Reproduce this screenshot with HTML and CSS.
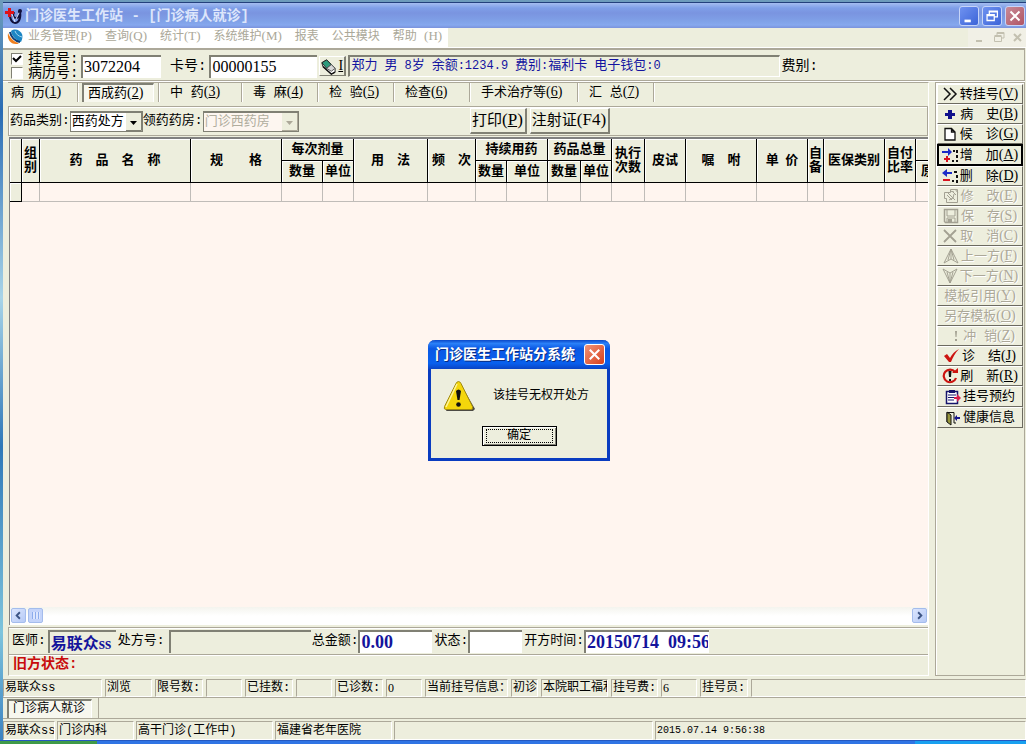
FILE: index.html
```html
<!DOCTYPE html>
<html lang="zh-CN">

<head>
    <meta charset="UTF-8">
    <title>门诊医生工作站</title>
    <link rel="stylesheet" href="styles.css">
</head>

<body>
    <div class="window">
        <div class="titlebar">
            <svg class="app-icon" viewBox="0 0 18 18">
                <path d="M5 8c0 4 2 8 5 8s6-3 5-11M9 5c-2 4 0 6 2 6s4-3 3-7" fill="none" stroke="#10103c" stroke-width="2.2"/>
                <path d="M7 7l3 8M15 4l-4 8" stroke="#dfe6ff" stroke-width="1"/>
                <circle cx="15" cy="4" r="2" fill="#10103c"/>
                <path d="M3 1h3v3h3v3H6v3H3V7H0V4h3z" fill="#e01218"/>
            </svg>
            <h1>门诊医生工作站 - [门诊病人就诊]</h1>
            <div class="win-btns">
                <button class="win-btn" aria-label="最小化"><svg viewBox="0 0 20 20"><path d="M5 14h7v3H5z" fill="#fff"/></svg></button>
                <button class="win-btn" aria-label="还原"><svg viewBox="0 0 20 20"><path d="M7 8V4.500h9V11h-3M7 5.500h9M4.500 8.500h8V15h-8zM4.500 9.500h8" fill="none" stroke="#fff" stroke-width="1.400"/></svg></button>
                <button class="win-btn win-close" aria-label="关闭"><svg viewBox="0 0 20 20"><path d="M5 5l10 10M15 5L5 15" stroke="#fff" stroke-width="2.200"/></svg></button>
            </div>
        </div>

        <div class="menubar">
            <nav class="menu">
                <svg class="menu-icon" viewBox="0 0 16 16">
                    <path d="M1 4C0 10 3 15 9 15c1 0 2 0 3-1C7 13 3 9 1 4z" fill="#f08020"/>
                    <path d="M4 2c4-3 9-1 11 3 1 3 0 6-1 8C9 11 5 8 4 2z" fill="#1d86c4"/>
                    <path d="M3 3c1 5 5 9 10 10" fill="none" stroke="#0d3f78" stroke-width="2"/>
                    <path d="M8 2c1 3 3 5 7 6" fill="none" stroke="#9fd4f0" stroke-width="1"/>
                </svg>
                <a href="#">业务管理<span class="key">(P)</span></a>
                <a href="#">查询<span class="key">(Q)</span></a>
                <a href="#">统计<span class="key">(T)</span></a>
                <a href="#">系统维护<span class="key">(M)</span></a>
                <a href="#">报表</a>
                <a href="#">公共模块</a>
                <a href="#">帮助 <span class="key">(H)</span></a>
            </nav>
            <div class="mdi-btns">
                <svg viewBox="0 0 12 12"><path d="M2 9h6v2H2z" fill="#c3c0b0"/></svg>
                <svg viewBox="0 0 12 12"><path d="M4 4V1.500h7V7H9M1.500 5.500h7v5h-7zM1.500 4.500h7M4 2.500h7" fill="none" stroke="#c3c0b0"/></svg>
                <svg viewBox="0 0 12 12"><path d="M2 3l7 7M9 3l-7 7" stroke="#c3c0b0" stroke-width="2"/></svg>
            </div>
        </div>

        <div class="patient-bar">
            <div class="checks">
                <label><input type="checkbox" checked>挂号号:</label>
                <label><input type="checkbox">病历号:</label>
            </div>
            <input class="field reg-no" type="text" value="3072204" aria-label="挂号号">
            <label class="big-label" for="card">卡号:</label>
            <input class="field card-no" id="card" type="text" value="00000155">
            <button class="read-card" aria-label="读卡">
                <svg viewBox="0 0 18 18">
                    <path d="M2 5l5-3 9 9v4l-4 2-9-8z" fill="#fff" stroke="#222"/>
                    <path d="M2 5l5-3 5 5-5 4z" fill="#2c9a7c" stroke="#222"/>
                    <path d="M7 11l5-4 4 4-4 3z" fill="#d8d8d8" stroke="#555"/>
                    <path d="M3 9l9 8 4-2" fill="none" stroke="#111" stroke-width="1.500"/>
                </svg>
                <u class="key">I</u>
            </button>
            <div class="patient-info">
                <span>郑力</span>
                <span>男</span>
                <span><i>8</i>岁</span>
                <span>余额<i>:1234.9</i></span>
                <span>费别<i>:</i>福利卡</span>
                <span>电子钱包<i>:0</i></span>
            </div>
            <span class="big-label fee-type">费别:</span>
        </div>

        <div class="main">
            <div class="workspace">
                <div class="tabs">
                    <button class="tab tab-short">病 历<span class="key">(<u>1</u>)</span></button>
                    <button class="tab tab-current"><span>西成药<span class="key">(<u>2</u>)</span></span></button>
                    <button class="tab tab-mid">中 药<span class="key">(<u>3</u>)</span></button>
                    <button class="tab">毒 麻<span class="key">(<u>4</u>)</span></button>
                    <button class="tab">检 验<span class="key">(<u>5</u>)</span></button>
                    <button class="tab">检查<span class="key">(<u>6</u>)</span></button>
                    <button class="tab tab-long">手术治疗等<span class="key">(<u>6</u>)</span></button>
                    <button class="tab">汇 总<span class="key">(<u>7</u>)</span></button>
                </div>

                <div class="filter">
                    <div class="filter-fields">
                        <label for="kind">药品类别:</label>
                        <select id="kind" class="combo">
                            <option>西药处方</option>
                        </select>
                        <label for="pharmacy">领药药房:</label>
                        <select id="pharmacy" class="combo combo-wide" disabled>
                            <option>门诊西药房</option>
                        </select>
                    </div>
                    <button class="tool-btn">打印<span class="key">(<u>P</u>)</span></button>
                    <button class="tool-btn">注射证<span class="key">(F4)</span></button>
                </div>

                <div class="grid">
                    <table>
                        <colgroup>
                            <col style="width:12px"><col style="width:18px"><col style="width:151px"><col style="width:91px">
                            <col style="width:41px"><col style="width:31px"><col style="width:74px"><col style="width:48px">
                            <col style="width:31px"><col style="width:41px"><col style="width:33px"><col style="width:31px">
                            <col style="width:33px"><col style="width:41px"><col style="width:71px"><col style="width:51px">
                            <col style="width:16px"><col style="width:61px"><col style="width:31px"><col style="width:24px">
                        </colgroup>
                        <thead>
                            <tr>
                                <th rowspan="2"></th>
                                <th rowspan="2">组<br>别</th>
                                <th rowspan="2">药&emsp;品&emsp;名&emsp;称</th>
                                <th rowspan="2">规&emsp;&emsp;格</th>
                                <th colspan="2">每次剂量</th>
                                <th rowspan="2">用&emsp;法</th>
                                <th rowspan="2">频&emsp;次</th>
                                <th colspan="2">持续用药</th>
                                <th colspan="2">药品总量</th>
                                <th rowspan="2">执行<br>次数</th>
                                <th rowspan="2">皮试</th>
                                <th rowspan="2">嘱&emsp;咐</th>
                                <th rowspan="2">单&ensp;价</th>
                                <th rowspan="2">自<br>备</th>
                                <th rowspan="2">医保类别</th>
                                <th rowspan="2">自付<br>比率</th>
                                <th></th>
                            </tr>
                            <tr>
                                <th>数量</th>
                                <th>单位</th>
                                <th>数量</th>
                                <th>单位</th>
                                <th>数量</th>
                                <th>单位</th>
                                <th>原</th>
                            </tr>
                        </thead>
                        <tbody>
                            <tr>
                                <th></th>
                                <td></td><td></td><td></td><td></td><td></td><td></td><td></td><td></td><td></td><td></td>
                                <td></td><td></td><td></td><td></td><td></td><td></td><td></td><td></td><td></td>
                            </tr>
                        </tbody>
                    </table>
                </div>
                <div class="scrollbar">
                    <button class="scroll-btn" aria-label="向左"><svg viewBox="0 0 14 14"><path d="M8.500 3.500L5 7l3.500 3.500" fill="none" stroke="#3c5484" stroke-width="2"/></svg></button>
                    <span class="scroll-thumb"></span>
                    <button class="scroll-btn scroll-right" aria-label="向右"><svg viewBox="0 0 14 14"><path d="M5.500 3.500L9 7l-3.500 3.500" fill="none" stroke="#3c5484" stroke-width="2"/></svg></button>
                </div>

                <div class="rx-bar">
                    <label for="doctor">医师:</label>
                    <input class="field blue doctor" id="doctor" type="text" value="易联众ss" readonly>
                    <label for="rx">处方号:</label>
                    <input class="field rx-no" id="rx" type="text" readonly>
                    <label for="total">总金额:</label>
                    <input class="field blue total" id="total" type="text" value="0.00">
                    <label for="state">状态:</label>
                    <input class="field state" id="state" type="text">
                    <label for="time">开方时间:</label>
                    <input class="field blue time" id="time" type="text" value="20150714&ensp;09:56">
                </div>
                <div class="old-state">旧方状态:</div>
            </div>

            <div class="actions">
                <button class="action"><svg viewBox="0 0 16 16"><path d="M2 2l6 6-6 6M8 2l6 6-6 6" fill="none" stroke="#111" stroke-width="1.500"/></svg><span>转挂号<span class="key">(<u>V</u>)</span></span></button>
                <button class="action"><svg viewBox="0 0 16 16"><path d="M6 4h4v3h3v3h-3v3H6v-3H3V7h3z" fill="#10108c"/></svg><span>病&emsp;史<span class="key">(<u>B</u>)</span></span></button>
                <button class="action"><svg viewBox="0 0 16 16"><path d="M3 2.500h6.500L13 6v8H3zM9.500 2.500V6H13" fill="#fff" stroke="#111" stroke-width="1.300"/></svg><span>候&emsp;诊<span class="key">(<u>G</u>)</span></span></button>
                <button class="action action-focus"><svg viewBox="0 0 16 16"><path d="M0 4h6V1l4 4-4 4V6H0z" fill="#1c2cc8"/><path d="M4 9h2v2h2v2H6v2H4v-2H2v-2h2z" fill="#d81420"/><path d="M11 3h2v2h-2zM14 3h2v3h-2zM14 8h2v3h-2zM14 13h2v2h-2zM10 13h2v2h-2z" fill="#111"/></svg><span>增&emsp;加<span class="key">(<u>A</u>)</span></span></button>
                <button class="action"><svg viewBox="0 0 16 16"><path d="M10 4H5V1L0 5l5 4V6h5z" fill="#1c2cc8"/><path d="M1 11h7v2H1z" fill="#d81420"/><path d="M12 3h3v2h-3zM14 7h2v3h-2zM14 12h2v3h-2zM10 12h2v2h-2z" fill="#111"/></svg><span>删&emsp;除<span class="key">(<u>D</u>)</span></span></button>
                <button class="action" disabled><svg viewBox="0 0 16 16"><path d="M1.500 4.500h6v-3h7v13h-11v-4h-2zM4 4l8 8M4 7l5 5M9 3l4 4M12 1l3 4M6 12l4-2 1-4M7 3l4 1" fill="none" stroke="#a3a192"/></svg><span>修&emsp;改<span class="key">(<u>E</u>)</span></span></button>
                <button class="action" disabled><svg viewBox="0 0 16 16"><path d="M1.500 1.500h13v13h-12l-1-1z" fill="none" stroke="#a3a192" stroke-width="1.500"/><path d="M4 2v6h8V2M4 14v-4h8v4" fill="none" stroke="#a3a192"/><path d="M5 11h4v3H5z" fill="#a3a192"/></svg><span>保&emsp;存<span class="key">(<u>S</u>)</span></span></button>
                <button class="action" disabled><svg viewBox="0 0 16 16"><path d="M2 2l12 12M14 2L2 14" stroke="#a3a192" stroke-width="1.800"/></svg><span>取&emsp;消<span class="key">(<u>C</u>)</span></span></button>
                <button class="action" disabled><svg viewBox="0 0 16 16"><path d="M8 1L1 15l7-4 7 4zM8 1v10M8 1L5 12M8 1l3 11" fill="none" stroke="#a3a192"/></svg><span>上一方<span class="key">(<u>F</u>)</span></span></button>
                <button class="action" disabled><svg viewBox="0 0 16 16"><path d="M8 15L1 1l7 4 7-4zM8 15V5M8 15L5 4M8 15l3-11" fill="none" stroke="#a3a192"/></svg><span>下一方<span class="key">(<u>N</u>)</span></span></button>
                <button class="action" disabled><span>模板引用<span class="key">(<u>Y</u>)</span></span></button>
                <button class="action" disabled><span>另存模板<span class="key">(<u>O</u>)</span></span></button>
                <button class="action" disabled><svg viewBox="0 0 16 16"><path d="M10 3h2l-.5 6h-1zM10 11h2v2h-2z" fill="#a3a192"/></svg><span>冲 销<span class="key">(<u>Z</u>)</span></span></button>
                <button class="action"><svg viewBox="0 0 16 16"><path d="M0 8l3-2 3 4c2-4 5-7 9-9-4 4-6 8-8 13H5z" fill="#cc1410"/></svg><span>诊&emsp;结<span class="key">(<u>J</u>)</span></span></button>
                <button class="action"><svg viewBox="0 0 16 16"><path d="M13 4a6.300 6.300 0 1 0 1 6" fill="none" stroke="#cc1410" stroke-width="2.200"/><path d="M10 5h6V0z" fill="#cc1410"/><path d="M6.500 3h3L9 9H7zM7 11h2v2H7z" fill="#111"/></svg><span>刷&emsp;新<span class="key">(<u>R</u>)</span></span></button>
                <button class="action action-tall"><svg viewBox="0 0 16 16"><path d="M1.500 2.500h11v12h-11z" fill="#fff" stroke="#15156c" stroke-width="1.500"/><path d="M4 1h6v3H4z" fill="#15156c"/><path d="M3 6h8M3 8.500h8M3 11h6" stroke="#15156c"/><path d="M9 8h3V5l4 4-4 4v-3H9z" fill="#d8204c"/></svg><span>挂号预约</span></button>
                <button class="action action-tall"><svg viewBox="0 0 16 16"><path d="M2 12V2.500h7V13h2" fill="none" stroke="#111"/><path d="M2 2l4 3v10l-4-3z" fill="#96963c" stroke="#111"/><path d="M9 8l3-3v2h3v2h-3v2z" fill="#15158c"/></svg><span>健康信息</span></button>
            </div>
        </div>

        <div class="status status-reg">
            <span>易联众ss</span>
            <span>浏览</span>
            <span>限号数:</span>
            <span></span>
            <span>已挂数:</span>
            <span></span>
            <span>已诊数:</span>
            <span class="digit">0</span>
            <span>当前挂号信息：</span>
            <span>初诊</span>
            <span>本院职工福利</span>
            <span>挂号费:</span>
            <span class="digit">6</span>
            <span>挂号员:</span>
            <span></span>
        </div>
        <div class="sheets">
            <button class="sheet"><span>门诊病人就诊</span></button>
        </div>
        <div class="status status-main">
            <span>易联众ss</span>
            <span>门诊内科</span>
            <span>高干门诊(工作中)</span>
            <span>福建省老年医院</span>
            <span></span>
            <span class="clock">2015.07.14 9:56:38</span>
        </div>
    </div>
    <div class="taskbar">
        <span class="start"></span>
        <span class="tray"></span>
    </div>

    <div class="dialog" role="alertdialog" aria-labelledby="dialog-title">
        <div class="dialog-title">
            <h2 id="dialog-title">门诊医生工作站分系统</h2>
            <button class="dialog-close" aria-label="关闭"><svg viewBox="0 0 20 20"><path d="M5 5l10 10M15 5L5 15" stroke="#fff" stroke-width="2.200"/></svg></button>
        </div>
        <div class="dialog-body">
            <div class="message">
                <svg viewBox="0 0 32 32">
                    <path d="M17 3L3 31h27l2-2z" fill="#4c4a44"/>
                    <path d="M15.500 1.500q-1.500 0-2.500 2L1.500 26.500q-1 3 1.500 3h25q2.500 0 1.500-3L18 3.500q-1-2-2.500-2z" fill="#f4d60c" stroke="#a08a10"/>
                    <path d="M14 4L3 27" stroke="#fff59a" stroke-width="1.500"/>
                    <path d="M13 11q2.500-3 5 0l-1.500 9h-2z" fill="#111"/>
                    <circle cx="15.500" cy="24.500" r="2.300" fill="#111"/>
                </svg>
                <p>该挂号无权开处方</p>
            </div>
            <button class="ok"><span>确定</span></button>
        </div>
    </div>
</body>

</html>
```
FILE: styles.css
```css
* {
    box-sizing: border-box;
}

body {
    margin: 0;
    min-height: 100vh;
    display: flex;
    flex-direction: column;
    position: relative;
    padding-top: 2px;
    background: linear-gradient(#6e9cbc, #2a6cb4 15%, #a8d4e8 40%, #2e78b8 60%, #7ec4dc 85%, #3a80c0);
    font-family: "Liberation Mono", "Noto Sans CJK SC", monospace;
    font-size: 13px;
    line-height: 16px;
    color: #000;
}

button,
input,
select {
    font: inherit;
    color: inherit;
    margin: 0;
    padding: 0;
    border-radius: 0;
}

button {
    white-space: pre;
    background: none;
    border: 0;
}

h1,
h2,
p {
    margin: 0;
}

.key {
    font-family: "Liberation Serif", serif;
    font-size: 14px;
}

.window {
    flex: 1;
    display: flex;
    flex-direction: column;
    margin-left: 3px;
    background: #edeedd;
    min-width: 0;
}

/* 标题栏 */
.titlebar {
    display: flex;
    align-items: center;
    height: 26px;
    padding: 0 1px 0 2px;
    border-top: 1px solid #24407c;
    background: linear-gradient(#a5bdf0, #7f9fe8 20%, #7a94e0 40%, #80a2e8 75%, #86a8ee 88%, #7a92dc);
}

.titlebar h1 {
    flex: 1;
    margin-left: 2px;
    font-size: 14px;
    color: #dde6fb;
}

.app-icon {
    width: 18px;
    height: 18px;
}

.win-btns {
    display: flex;
    gap: 3px;
}

.win-btn {
    width: 20px;
    height: 20px;
    border: 1px solid #c6d4f8;
    border-radius: 3px;
    background: linear-gradient(135deg, #6f92f0, #3c64d8);
}

.win-btn svg,
.dialog-close svg {
    display: block;
    width: 100%;
    height: 100%;
}

.win-close {
    background: linear-gradient(135deg, #c88a98, #b05464);
}

.menubar {
    display: flex;
    justify-content: space-between;
    height: 20px;
    border-bottom: 1px solid #fff;
}

.menu {
    display: flex;
    align-items: baseline;
    gap: 13px;
    padding: 0 6px 0 4px;
    background: #fff;
    font-size: 12px;
    line-height: 16px;
}

.menu a {
    color: #aba899;
    text-decoration: none;
}

.menu .key {
    font-size: 13px;
}

.menu-icon {
    align-self: flex-start;
    width: 16px;
    height: 16px;
    margin: 1px -8px 0 0;
}

.mdi-btns {
    display: flex;
    gap: 7px;
    padding: 3px 2px 0 6px;
    background: #f1f0e6;
}

.mdi-btns svg {
    width: 12px;
    height: 12px;
}

/* 病人信息 */
.patient-bar {
    display: flex;
    align-items: center;
    height: 33px;
    margin: 0 1px 0 0;
    padding: 2px 4px 0;
    border-top: 2px solid #aca899;
    border-bottom: 1px solid #aca899;
    border-right: 1px solid #aca899;
    box-shadow: 0 1px #fff;
}

.checks {
    width: 74px;
}

.checks label {
    display: flex;
    align-items: center;
    gap: 5px;
    height: 14px;
    font-size: 14px;
    line-height: 14px;
}

input[type="checkbox"] {
    appearance: none;
    width: 12px;
    height: 12px;
    margin-left: 4px;
    background: #fff;
    border: 1px solid #fff;
    border-top-color: #808074;
    border-left-color: #808074;
}

input[type="checkbox"]:checked {
    background: #fff url("data:image/svg+xml,%3Csvg xmlns='http://www.w3.org/2000/svg' viewBox='0 0 10 10'%3E%3Cpath d='M1 4l3 3 5-5' fill='none' stroke='black' stroke-width='2'/%3E%3C/svg%3E");
}

.field {
    height: 23px;
    padding: 0 1px;
    background: #fff;
    border: 0;
    border-top: 2px solid #808074;
    border-left: 2px solid #808074;
    outline: 0;
}

.reg-no,
.card-no {
    font-family: "Liberation Serif", serif;
    font-size: 16px;
}

.reg-no {
    width: 80px;
}

.card-no {
    width: 108px;
}

.big-label {
    padding: 0 3px 0 9px;
    font-size: 14px;
    line-height: 20px;
    white-space: nowrap;
}

.read-card {
    display: flex;
    align-items: center;
    gap: 1px;
    width: 27px;
    height: 20px;
    margin: 0 2px;
    border: 1px solid #fff;
    border-bottom-color: #808074;
    border-right: 2px solid #808074;
}

.read-card svg {
    flex: none;
    width: 17px;
    height: 17px;
}

.patient-info {
    display: flex;
    gap: 7px;
    flex: 0 1 432px;
    height: 22px;
    padding: 0 1px;
    overflow: hidden;
    line-height: 18px;
    white-space: nowrap;
    color: #1414a0;
    border-top: 2px solid #808074;
    border-left: 2px solid #808074;
    border-bottom: 1px solid #fff;
    border-right: 1px solid #fff;
}

.patient-info i {
    font-size: 12px;
    font-style: normal;
}

.fee-type {
    padding-left: 1px;
}

.main {
    flex: 1;
    display: flex;
    gap: 6px;
    padding: 1px 1px 3px 5px;
}

.workspace {
    flex: 1;
    min-width: 0;
    display: flex;
    flex-direction: column;
    border-top: 1px solid #aca899;
    border-right: 1px solid #fff;
}

.tabs {
    display: flex;
    height: 19px;
    margin-bottom: 4px;
}

.tab {
    flex: 0 0 76px;
    padding-left: 11px;
    text-align: left;
    border-right: 1px solid #aca899;
    box-shadow: 1px 0 #fff;
}

.tab-short {
    flex-basis: 70px;
    padding-left: 3px;
}

.tab-current {
    flex-basis: 81px;
    padding: 0 4px;
}

.tab-current > span,
.sheet > span {
    display: block;
    padding-left: 4px;
    background: #f7f7ee;
    border-top: 2px solid #808074;
    border-left: 2px solid #808074;
    border-right: 1px solid #fff;
}

.tab-mid {
    flex-basis: 83px;
}

.tab-long {
    flex-basis: 108px;
}

.filter {
    display: flex;
    align-items: center;
    gap: 3px;
    height: 30px;
    padding: 0 1px;
    border: 1px solid #aca899;
    box-shadow: inset 1px 1px #fff;
}

.filter-fields {
    display: flex;
    align-items: center;
    flex: 0 0 457px;
}

.combo {
    appearance: none;
    width: 73px;
    height: 21px;
    padding-left: 1px;
    color: #000;
    background: #fff url("data:image/svg+xml,%3Csvg xmlns='http://www.w3.org/2000/svg' width='16' height='18'%3E%3Cpath fill='%23edeedd' d='M0 0h16v18H0z'/%3E%3Cpath d='M0 17.500h15.500V0' fill='none' stroke='%23808074'/%3E%3Cpath d='M4 8h7l-3.500 4z'/%3E%3C/svg%3E") right center no-repeat;
    border: 1px solid #808074;
    border-top-width: 2px;
    opacity: 1;
}

.combo-wide {
    width: 96px;
}

.combo:disabled {
    color: #b0ad9e;
    background: #fdf6f0 url("data:image/svg+xml,%3Csvg xmlns='http://www.w3.org/2000/svg' width='16' height='18'%3E%3Cpath fill='%23edeedd' d='M0 0h16v18H0z'/%3E%3Cpath d='M0 17.500h15.500V0' fill='none' stroke='%23aca899'/%3E%3Cpath d='M4 8h7l-3.500 4z' fill='%23aca899'/%3E%3C/svg%3E") right center no-repeat;
}

.tool-btn {
    height: 26px;
    padding: 0 2px 0 1px;
    font-size: 15px;
    border: 1px solid #fff;
    border-right: 2px solid #808074;
    border-bottom: 2px solid #808074;
}

.tool-btn .key {
    font-size: 17px;
}

/* 处方表格 */
.grid {
    flex: 1;
    min-height: 120px;
    margin: 1px 0 0 1px;
    overflow: hidden;
    background: #fff5ef;
    border-top: 2px solid #808080;
    border-left: 1px solid #808080;
}

table {
    width: 930px;
    table-layout: fixed;
    border-collapse: separate;
    border-spacing: 0;
}

th,
td {
    padding: 0;
    height: 22px;
    overflow: hidden;
}

th {
    line-height: 14px;
    white-space: nowrap;
    background: #edeedd;
    border-right: 1px solid #000;
    border-bottom: 1px solid #000;
    box-shadow: inset 1px 1px #fff;
}

td {
    border-right: 1px solid #c0bcb8;
    border-bottom: 1px solid #c0bcb8;
}

tbody th,
td {
    height: 19px;
}

.scrollbar {
    display: flex;
    gap: 2px;
    height: 18px;
    margin: 0 0 2px 1px;
    padding: 1px;
    background: linear-gradient(#f4f4ee, #fff 50%);
    border-left: 1px solid #808080;
}

.scroll-btn,
.scroll-thumb {
    width: 15px;
    height: 15px;
    border: 1px solid #a4bcec;
    border-radius: 2px;
    background: linear-gradient(135deg, #dce6fe, #b6caf6);
}

.scroll-btn svg {
    display: block;
    width: 13px;
    height: 13px;
}

.scroll-thumb {
    background: repeating-linear-gradient(90deg, #8cacec 0 1px, #dce6fe 1px 3px) center / 8px 7px no-repeat, #c4d4fa;
}

.scroll-right {
    margin-left: auto;
}

.rx-bar {
    display: flex;
    align-items: center;
    height: 28px;
    padding: 1px 3px;
    border: solid #aca899;
    border-width: 1px 0 1px 1px;
    box-shadow: inset 0 1px #fff;
}

.rx-bar label {
    white-space: nowrap;
}

.rx-bar .field {
    margin-right: 2px;
}

.blue {
    color: #14149c;
    font-family: "Liberation Serif", "Noto Sans CJK SC", serif;
    font-size: 18px;
    font-weight: bold;
}

.doctor,
.rx-no {
    background: #edeedd;
}

.rx-bar .doctor {
    width: 68px;
    margin-left: 2px;
    font-size: 16px;
}

.rx-bar .rx-no {
    width: 142px;
    margin-left: 4px;
    margin-right: 1px;
}

.total {
    width: 74px;
}

.state {
    width: 54px;
}

.time {
    width: 125px;
}

.old-state {
    height: 21px;
    padding: 1px 4px;
    color: #c80c0c;
    font-size: 14px;
    font-weight: bold;
    border-left: 1px solid #aca899;
    border-bottom: 1px solid #fff;
    box-shadow: inset 0 1px #fff;
}

/* 右侧操作按钮 */
.actions {
    flex: 0 0 90px;
    display: flex;
    flex-direction: column;
    padding: 1px;
    border: 1px solid #aca899;
    box-shadow: inset 1px 1px #fff;
}

.action {
    display: flex;
    align-items: center;
    justify-content: center;
    gap: 2px;
    height: 20px;
    line-height: 18px;
    border: 1px solid #fff;
    border-right: 1px solid #6c6a60;
    border-bottom: 1px solid #6c6a60;
}

.action svg {
    flex: none;
    width: 16px;
    height: 16px;
}

.action:disabled {
    color: #aca899;
    text-shadow: 1px 1px #fff;
}

.action-focus {
    height: 22px;
    border: 2px solid #000;
}

.action-tall {
    height: 21px;
}

/* 状态栏 */
.status {
    display: grid;
    gap: 3px;
    font-size: 12px;
}

.status span {
    overflow: hidden;
    white-space: nowrap;
    padding-left: 1px;
    border: 1px solid #fff;
    border-top-color: #aca899;
    border-left-color: #aca899;
}

.status .digit {
    font-family: "Liberation Serif", serif;
}

.status .clock {
    font-size: 10px;
}

.status-reg {
    grid-template-columns: 99px 47px 48px 36px 48px 36px 48px 36px 83px 27px 67px 47px 36px 48px 1fr;
    height: 18px;
}

.status-main {
    grid-template-columns: 52px 77px 137px 117px 259px 1fr;
    gap: 2px;
    height: 19px;
    line-height: 18px;
}

.sheets {
    height: 22px;
    margin-bottom: 2px;
    border-top: 1px solid #aca899;
    border-bottom: 1px solid #aca899;
}

.sheet {
    height: 20px;
    padding: 1px 6px 0 4px;
    font-size: 12px;
    border-right: 1px solid #aca899;
}

.sheet > span {
    line-height: 17px;
    padding-right: 6px;
}

.taskbar {
    display: flex;
    justify-content: space-between;
    height: 4px;
    background: #2f74e4;
    border-top: 1px solid #2458c0;
}

.start {
    width: 97px;
    background: #3f9a48;
}

.tray {
    width: 111px;
    background: #18a0f0;
}

/* 提示框 */
.dialog {
    position: absolute;
    left: 428px;
    top: 340px;
    width: 182px;
    background: #edeedd;
    border: 3px solid #0a3cc0;
    border-top: 0;
    border-radius: 7px 7px 0 0;
}

.dialog-title {
    display: flex;
    align-items: center;
    justify-content: space-between;
    height: 29px;
    margin: 0 -3px;
    padding: 0 5px 0 7px;
    color: #fff;
    border-radius: 7px 7px 0 0;
    background: linear-gradient(#0a48c8, #2a80f8 12%, #0a58e4 30%, #0860ee 80%, #0a44c4);
}

.dialog-title h2 {
    font-size: 14px;
    text-shadow: 1px 1px #0a2c80;
}

.dialog-close {
    width: 21px;
    height: 21px;
    border: 1px solid #fff;
    border-radius: 3px;
    background: linear-gradient(135deg, #f09478, #d8401c);
}

.dialog-body {
    padding: 11px 12px 12px;
    text-align: center;
}

.message {
    display: flex;
    gap: 18px;
    margin-bottom: 14px;
    text-align: left;
    font-size: 12px;
}

.message svg {
    flex: none;
    width: 32px;
    height: 32px;
}

.message p {
    margin-top: 8px;
    white-space: nowrap;
}

.ok {
    width: 75px;
    height: 20px;
    padding: 2px;
    font-size: 12px;
    line-height: 12px;
    border: 1px solid #000;
    box-shadow: inset 1px 1px #fff, inset -1px -1px #808074;
}

.ok span {
    display: block;
    margin: 0 1px;
    border: 1px dotted #000;
}
```
